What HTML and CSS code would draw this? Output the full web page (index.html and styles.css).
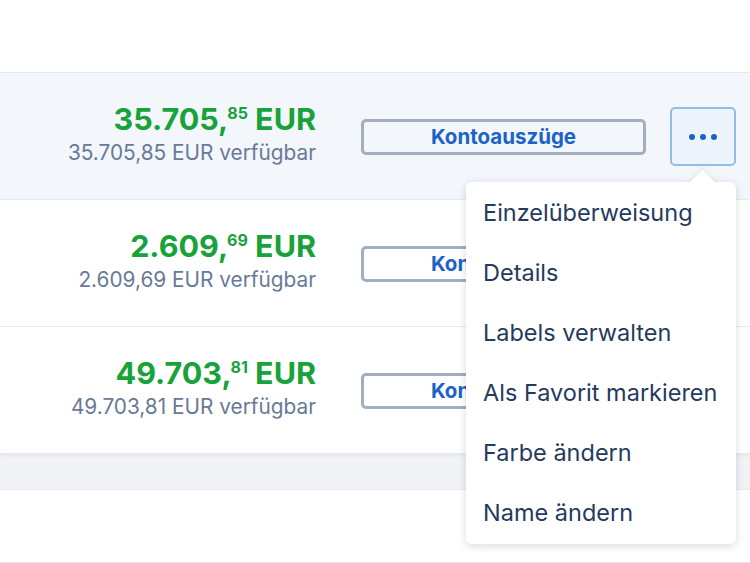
FILE: index.html
```html
<!DOCTYPE html>
<html lang="de">
<head>
<meta charset="utf-8">
<title>Konten</title>
<link rel="stylesheet" href="styles.css">
</head>
<body>
<div class="page">
  <div class="top"></div>
  <div class="accounts">
    <div class="row row-active">
      <div class="amount">
        <div class="balance">35.705,<span class="cents">85</span> EUR</div>
        <div class="available">35.705,85 EUR verfügbar</div>
      </div>
      <button class="btn-statements">Kontoauszüge</button>
      <button class="btn-more" aria-label="Mehr">
        <span class="dot"></span><span class="dot"></span><span class="dot"></span>
      </button>
    </div>
    <div class="row">
      <div class="amount">
        <div class="balance">2.609,<span class="cents">69</span> EUR</div>
        <div class="available">2.609,69 EUR verfügbar</div>
      </div>
      <button class="btn-statements">Kontoauszüge</button>
      <div class="spacer"></div>
    </div>
    <div class="row">
      <div class="amount">
        <div class="balance">49.703,<span class="cents">81</span> EUR</div>
        <div class="available">49.703,81 EUR verfügbar</div>
      </div>
      <button class="btn-statements">Kontoauszüge</button>
      <div class="spacer"></div>
    </div>
  </div>
  <div class="band"></div>
  <div class="next"></div>

  <ul class="menu">
    <li>Einzelüberweisung</li>
    <li>Details</li>
    <li>Labels verwalten</li>
    <li>Als Favorit markieren</li>
    <li>Farbe ändern</li>
    <li>Name ändern</li>
  </ul>
</div>
</body>
</html>
```
FILE: styles.css
```css
* { box-sizing: border-box; }
html, body {
  margin: 0;
  padding: 0;
  background: #ffffff;
  font-family: Inter, "Noto Sans", "DejaVu Sans", sans-serif;
}
.page {
  position: relative;
  width: 750px;
  height: 563px;
  overflow: hidden;
}
.top {
  height: 73px;
  border-bottom: 1px solid #e5e8ec;
}
.accounts {
  background: #ffffff;
}
.row {
  height: 127px;
  border-bottom: 1px solid #e6e9ed;
  display: grid;
  grid-template-columns: 316px 285px 66px;
  column-gap: 45px;
  align-items: center;
}
.row > :nth-child(3) { margin-left: -21px; }
.row:last-child { border-bottom: none; height: 126px; }
.row-active { background: #f3f6fa; }
.amount {
  text-align: right;
  padding-bottom: 1px;
}
.balance {
  color: #18a23a;
  font-weight: 700;
  font-size: 30.5px;
  line-height: 34px;
}
.cents {
  font-size: 16px;
  vertical-align: 11px;
  line-height: 1;
  margin-left: -1px;
}
.available {
  color: #687a98;
  font-size: 20.8px;
  line-height: 34px;
}
.btn-statements {
  height: 36px;
  margin-top: 1px;
  border: 3px solid #a3afbf;
  border-radius: 5px;
  background: transparent;
  color: #1b63c6;
  font-family: inherit;
  font-weight: 700;
  font-size: 20.5px;
  padding: 0;
  line-height: 28px;
}
.btn-more {
  width: 66px;
  height: 59px;
  margin-top: 1px;
  border: 2px solid #92bde8;
  border-radius: 5px;
  background: #eef4fc;
  display: flex;
  align-items: center;
  justify-content: center;
  gap: 5px;
  padding: 0;
}
.dot {
  width: 6px;
  height: 6px;
  border-radius: 50%;
  background: #1b63c6;
}
.band {
  height: 36px;
  background: #f1f3f6;
  box-shadow: inset 0 5px 5px -3px rgba(30, 40, 60, 0.07);
}
.next {
  height: 74px;
  border-top: 1px solid #e9ecef;
  border-bottom: 1px solid #e3e6ea;
}
.menu {
  position: absolute;
  left: 466px;
  top: 182px;
  width: 270px;
  height: 362px;
  margin: 0;
  padding: 1px 0 0;
  list-style: none;
  background: #ffffff;
  border-radius: 6px;
  box-shadow: 0 2px 8px rgba(20, 30, 50, 0.16);
}
.menu::before {
  content: "";
  position: absolute;
  left: 226px;
  top: -8px;
  width: 21px;
  height: 21px;
  background: #ffffff;
  transform: rotate(45deg);
  box-shadow: -2px -2px 4px rgba(20, 30, 50, 0.05);
}
.menu li {
  position: relative;
  height: 60px;
  line-height: 60px;
  padding-left: 17px;
  font-size: 23.5px;
  color: #253a5d;
  white-space: nowrap;
}
```
